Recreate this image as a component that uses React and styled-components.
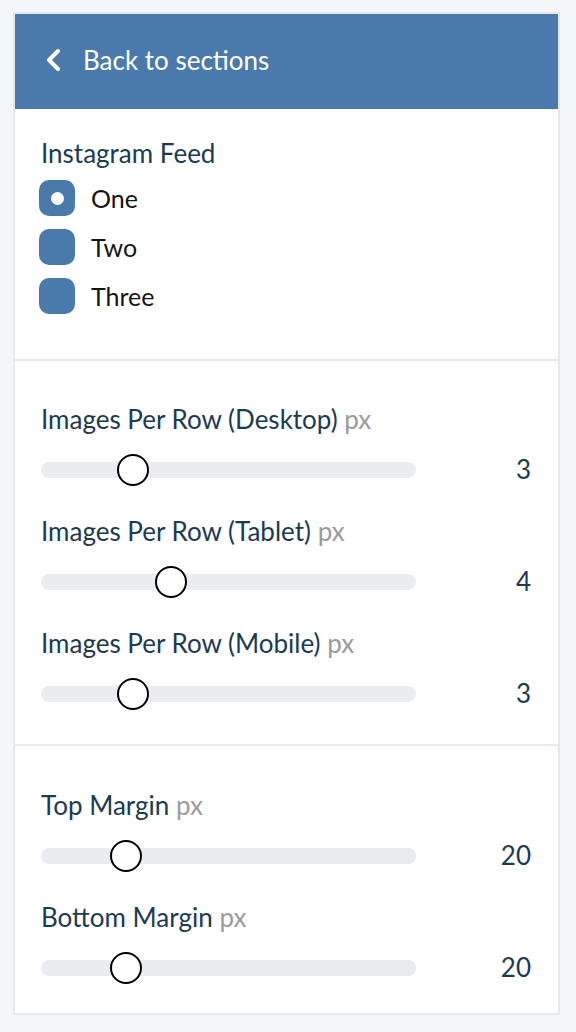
import React from "react";
import styled, { createGlobalStyle } from "styled-components";

const GlobalStyle = createGlobalStyle`
  body {
    margin: 0;
    background: #f5f6fa;
    font-family: "Lato", "Liberation Sans", sans-serif;
  }
`;

const Panel = styled.div`
  margin: 12px 0 0 13px;
  width: 543px;
  background: #fff;
  border: 2px solid #e4e7ee;
`;

const Header = styled.div`
  height: 95px;
  box-sizing: border-box;
  padding: 0 0 3px 30px;
  background: #4a7aab;
  display: flex;
  align-items: center;
  gap: 21px;
  color: #fff;
  font-size: 26px;
`;

const Section = styled.div`
  padding: ${p => p.pad};
  border-top: ${p => (p.first ? "none" : "2px solid #e6e9ef")};
`;

const Title = styled.div`
  font-size: 26px;
  line-height: 30px;
  color: #1c3b50;
  margin-bottom: ${p => p.mb || 0}px;
  padding-left: ${p => p.indent || 0}px;
`;

const Unit = styled.span`
  color: #9b9b9b;
`;

const RadioList = styled.div`
  display: flex;
  flex-direction: column;
  gap: 13px;
`;

const RadioRow = styled.label`
  display: flex;
  align-items: center;
  gap: 16px;
  font-size: 25px;
  color: #141414;
`;

const RadioBox = styled.span`
  width: 36px;
  height: 36px;
  border-radius: 10px;
  background: #4a7aab;
  display: flex;
  align-items: center;
  justify-content: center;
  &::after {
    content: "";
    display: ${p => (p.checked ? "block" : "none")};
    width: 13px;
    height: 13px;
    border-radius: 50%;
    background: #fff;
  }
`;

const Field = styled.div`
  margin-top: ${p => (p.first ? 0 : 30)}px;
`;

const SliderRow = styled.div`
  display: flex;
  align-items: center;
  margin-top: 20px;
  height: 32px;
`;

const Track = styled.div`
  position: relative;
  width: 375px;
  height: 16px;
  border-radius: 8px;
  background: #ebecef;
`;

const Thumb = styled.span`
  position: absolute;
  top: 50%;
  width: 28px;
  height: 28px;
  margin: -16px 0 0 -16px;
  border-radius: 50%;
  border: 2px solid #000;
  background: #fff;
`;

const Value = styled.div`
  flex: 1;
  text-align: right;
  font-size: 26px;
  line-height: 30px;
  margin-top: -3px;
  color: #1c3b50;
`;

const Slider = ({ label, value, min, max, first }) => {
  const pos = 16 + ((value - min) / (max - min)) * (375 - 32);
  return (
    <Field first={first}>
      <Title>
        {label} <Unit>px</Unit>
      </Title>
      <SliderRow>
        <Track>
          <Thumb style={{ left: pos }} />
        </Track>
        <Value>{value}</Value>
      </SliderRow>
    </Field>
  );
};

const Chevron = () => (
  <svg width="17" height="24" viewBox="0 0 17 24">
    <polyline
      points="13,3 4,12 13,21"
      fill="none"
      stroke="#fff"
      strokeWidth="4"
      strokeLinecap="round"
      strokeLinejoin="round"
    />
  </svg>
);

export default function App() {
  return (
    <>
      <GlobalStyle />
      <Panel>
        <Header>
          <Chevron />
          <span>Back to sections</span>
        </Header>
        <Section first pad="29px 26px 45px 24px">
          <Title mb={12} indent={2}>Instagram Feed</Title>
          <RadioList>
            <RadioRow>
              <RadioBox checked />
              One
            </RadioRow>
            <RadioRow>
              <RadioBox />
              Two
            </RadioRow>
            <RadioRow>
              <RadioBox />
              Three
            </RadioRow>
          </RadioList>
        </Section>
        <Section pad="43px 27px 34px 26px">
          <Slider first label="Images Per Row (Desktop)" value={3} min={1} max={10} />
          <Slider label="Images Per Row (Tablet)" value={4} min={1} max={10} />
          <Slider label="Images Per Row (Mobile)" value={3} min={1} max={10} />
        </Section>
        <Section pad="44px 27px 29px 26px">
          <Slider first label="Top Margin" value={20} min={0} max={100} />
          <Slider label="Bottom Margin" value={20} min={0} max={100} />
        </Section>
      </Panel>
    </>
  );
}
